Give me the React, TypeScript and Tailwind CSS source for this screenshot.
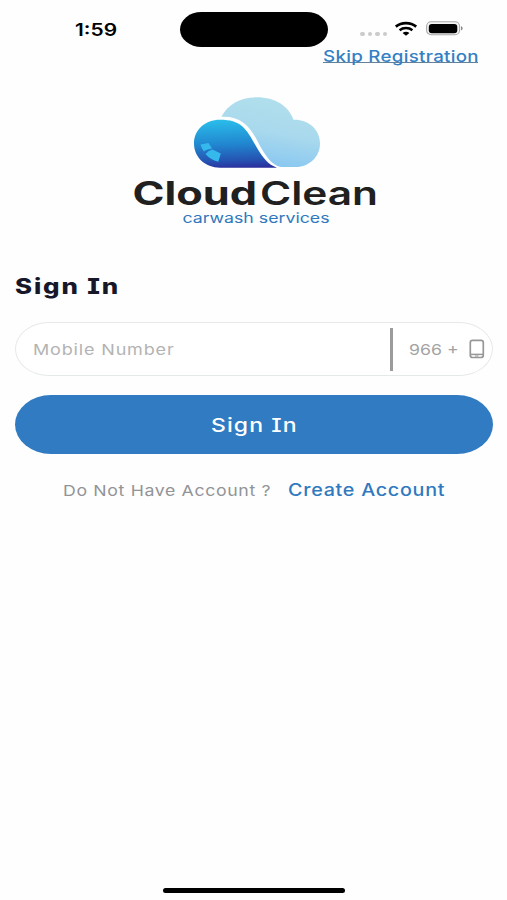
import React from "react";
import clsx from "clsx";

interface WideTextProps {
  className?: string;
  children: React.ReactNode;
}

const WideText: React.FC<WideTextProps> = ({ className, children }) => (
  <span
    className={clsx(
      "block origin-left whitespace-pre [font-feature-settings:'cv08']",
      className
    )}
  >
    {children}
  </span>
);

const WifiIcon = () => (
  <svg width="24" height="16" viewBox="0 0 24 16" fill="none" stroke="#000">
    <path d="M1.8 5.6C7.5 .9 16.5 .9 22.2 5.6" strokeWidth="2.7" />
    <path d="M5.6 9.2C9.2 6.3 14.8 6.3 18.4 9.2" strokeWidth="2.5" />
    <path d="M8.6 12.1C10.5 10.4 13.5 10.4 15.4 12.1L12 14.8Z" fill="#000" stroke="none" />
  </svg>
);

const BatteryIcon = () => (
  <svg width="38" height="15" viewBox="0 0 38 15">
    <rect x=".6" y=".8" width="33" height="13" rx="4.5" fill="#f4f4f4" stroke="#a9a9a9" strokeWidth="1.1" />
    <rect x="2.8" y="3" width="28.5" height="9.2" rx="3" fill="#000" />
    <path d="M35 5.2C37.2 5.8 37.2 8.8 35 9.4Z" fill="#8c8c8c" />
  </svg>
);

const StatusBar = () => (
  <div className="flex h-12 shrink-0 items-start">
    <div className="w-[180px] pt-[20px] pl-[75px]">
      <WideText className="scale-x-[1.23] text-[17px] leading-5 font-semibold">
        1:59
      </WideText>
    </div>
    <div className="mt-[12px] h-[35px] w-[148px] rounded-[22px/18px] bg-black" />
    <div className="flex pt-[21px] pl-[32px]">
      <div className="mt-[10.5px] flex h-1 w-[34px] gap-[3px]">
        <i className="h-1 w-[4.5px] rounded-full bg-[#cbcbcb]" />
        <i className="h-1 w-[4.5px] rounded-full bg-[#cbcbcb]" />
        <i className="h-1 w-[4.5px] rounded-full bg-[#cbcbcb]" />
        <i className="h-1 w-[4.5px] rounded-full bg-[#cbcbcb]" />
      </div>
      <WifiIcon />
      <div className="ml-2">
        <BatteryIcon />
      </div>
    </div>
  </div>
);

const Logo = () => (
  <svg width="270" height="150" viewBox="120 85 270 150" className="block">
    <defs>
      <linearGradient id="cloud" x1=".65" y1="0" x2=".4" y2="1">
        <stop offset="0" stopColor="#b1dfec" />
        <stop offset=".5" stopColor="#a9d9ed" />
        <stop offset="1" stopColor="#86c6f1" />
      </linearGradient>
      <linearGradient id="drop" x1=".45" y1="0" x2=".52" y2="1">
        <stop offset="0" stopColor="#2abcea" />
        <stop offset=".5" stopColor="#2187d0" />
        <stop offset=".85" stopColor="#2552b2" />
        <stop offset="1" stopColor="#2b309e" />
      </linearGradient>
    </defs>
    <path
      d="M221.5 116.8C227 105 240 97.2 257 97.2C275 97.2 289 106 293.5 119.8C309 119.5 320 130 320 143.5C320 157 309 167 296 167L281 167C271 165 265 155 258.5 143C250 126 241 116 221.5 116.8Z"
      fill="url(#cloud)"
    />
    <path
      d="M220 119.8C205 119.8 194 130 194 143.5C194 157 205 167.7 220 167.7L277 167.7C268 164.5 263 158 256.5 147C246 128 241 119.8 220 119.8Z"
      fill="url(#drop)"
    />
    <path d="M200.5 144.5L208.5 143L212 148.5Q206 149.5 204 151.5Q201.5 148.5 200.5 144.5Z" fill="#35b9ed" />
    <path d="M205.5 154Q208.5 150.5 212.5 149.6L220.8 153.5L218.3 161.8Q210 159.5 205.5 154Z" fill="#35b9ed" />
    <g fontFamily="Inter, sans-serif" fill="#202020">
      <text x="132.5" y="205" fontSize="32" fontWeight="700" textLength="124.5" lengthAdjust="spacingAndGlyphs">
        Cloud
      </text>
      <text x="260" y="205" fontSize="32" fontWeight="600" textLength="118" lengthAdjust="spacingAndGlyphs">
        Clean
      </text>
      <text x="182.5" y="222.6" fontSize="14" fontWeight="400" fill="#3078bd" textLength="147" lengthAdjust="spacingAndGlyphs">
        carwash services
      </text>
    </g>
  </svg>
);

const PhoneIcon = () => (
  <svg width="16" height="20" viewBox="0 0 16 20" fill="none">
    <rect x="1.3" y="1.3" width="13" height="17.2" rx="2.3" stroke="#979797" strokeWidth="1.7" />
    <path d="M1.5 15.4H14" stroke="#979797" strokeWidth="1.5" />
    <path d="M6 17H9.5" stroke="#979797" />
  </svg>
);

const App: React.FC = () => {
  return (
    <main className="flex h-[900px] w-[507px] flex-col overflow-hidden bg-[#fefefe] font-[Inter,sans-serif] text-black">
      <StatusBar />

      <a href="#" className="ml-[323px] block h-[15px] w-[155px] border-b border-[#64819c] text-[#3480c4]">
        <WideText className="scale-x-[1.17] text-[16px] leading-4 font-medium tracking-[0.25px]">
          Skip Registration
        </WideText>
      </a>

      <div className="mt-[22px] ml-[120px]">
        <Logo />
      </div>

      <h1 className="mt-[40px] ml-[15px] h-6 text-[#17172a]">
        <WideText className="scale-x-[1.23] text-[21px] leading-6 font-extrabold tracking-[1.5px]">
          Sign In
        </WideText>
      </h1>

      <div className="mt-[23px] ml-[15px] flex h-[54px] w-[478px] shrink-0 items-center rounded-[34px/27px] border border-[#e6e9e9] bg-white">
        <div className="w-[374px] pt-[2px] pl-[17px] text-[#b3b3b3]">
          <WideText className="scale-x-[1.2] text-[15px] leading-5 tracking-[0.7px]">
            Mobile Number
          </WideText>
        </div>
        <div className="h-[43px] w-[2.5px] bg-[#9b9b9b]" />
        <div className="w-[60px] pt-[2px] pl-[16.5px] text-[#a3a3a3]">
          <WideText className="scale-x-[1.18] text-[15px] leading-5">
            966 +
          </WideText>
        </div>
        <div className="ml-[16px]">
          <PhoneIcon />
        </div>
      </div>

      <button className="mt-[19px] ml-[15px] flex h-[59px] w-[478px] shrink-0 items-center rounded-[36px/29.5px] bg-[#307bc1] pt-[2px] pl-[196px] text-white">
        <WideText className="scale-x-[1.21] text-[19px] leading-6 font-medium tracking-[0.9px]">
          Sign In
        </WideText>
      </button>

      <div className="mt-[24px] flex h-6 items-center pl-[63px]">
        <div className="w-[225px] pt-[2px] text-[#929497]">
          <WideText className="scale-x-[1.18] text-[15px] leading-6 tracking-[0.55px]">
            Do Not Have Account ?
          </WideText>
        </div>
        <a href="#" className="text-[#3079bf]">
          <WideText className="scale-x-[1.16] text-[17px] leading-6 font-medium tracking-[0.63px]">
            Create Account
          </WideText>
        </a>
      </div>

      <div className="mt-auto mb-[7.5px] ml-[163px] h-[5px] w-[182px] rounded-full bg-black" />
    </main>
  );
};

export default App;
